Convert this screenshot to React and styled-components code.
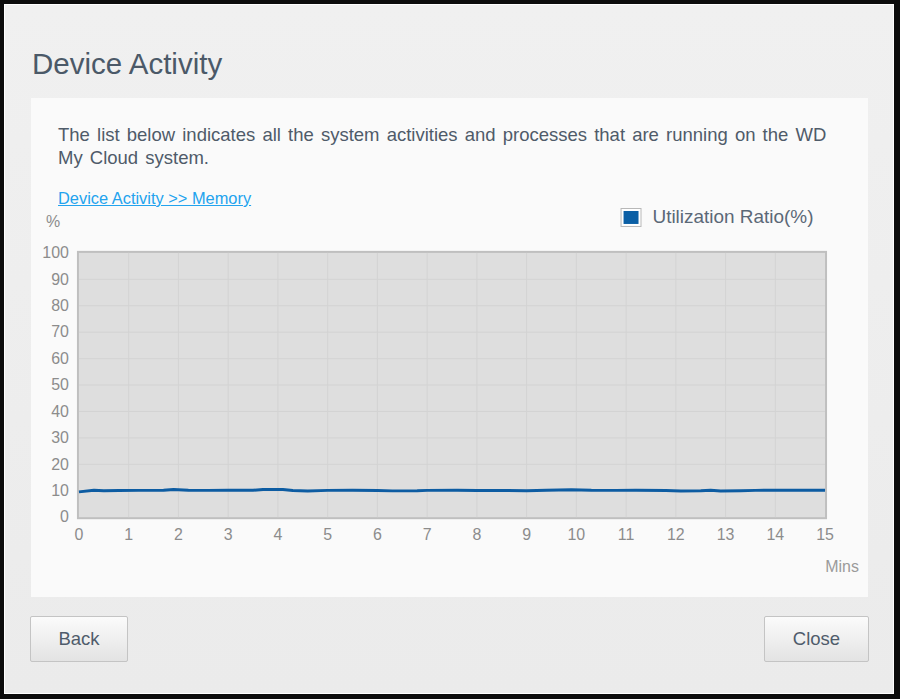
import React from 'react';
import styled, { createGlobalStyle } from 'styled-components';

const GlobalStyle = createGlobalStyle`
  html, body {
    margin: 0;
    padding: 0;
    background: #000;
  }
  body {
    font-family: "Liberation Sans", Arial, sans-serif;
  }
`;

// page coordinates of the chart
const X0 = 78;
const XSTEP = 49.87;
const Y0 = 516;
const YSTEP = 2.65;
const xOf = t => X0 + t * XSTEP;
const yOf = v => Y0 - v * YSTEP;

const samples = [
  [0, 9.6], [0.3, 10.2], [0.5, 10.0], [0.8, 10.1], [1.2, 10.15], [1.7, 10.2],
  [1.9, 10.5], [2.2, 10.2], [2.6, 10.15], [3.0, 10.2], [3.5, 10.2], [3.7, 10.5],
  [4.1, 10.45], [4.3, 10.1], [4.6, 9.9], [5.0, 10.15], [5.5, 10.2], [6.0, 10.1],
  [6.3, 9.95], [6.8, 10.0], [7.0, 10.15], [7.6, 10.2], [8.0, 10.1], [8.6, 10.15],
  [9.0, 10.0], [9.4, 10.2], [9.9, 10.4], [10.3, 10.2], [10.8, 10.15], [11.2, 10.2],
  [11.8, 10.1], [12.1, 9.9], [12.5, 10.0], [12.7, 10.2], [12.9, 9.9], [13.3, 10.0],
  [13.6, 10.15], [14.2, 10.2], [15, 10.2],
];

const yTicks = [0, 10, 20, 30, 40, 50, 60, 70, 80, 90, 100];
const xTicks = Array.from({ length: 16 }, (_, i) => i);

function UsageChart() {
  const points = samples.map(([t, v]) => `${xOf(t).toFixed(1)},${yOf(v).toFixed(1)}`).join(' ');
  return (
    <ChartSvg viewBox="31 205 837 391">
      <text x="45" y="225.5" fill="#8c8c8c" fontSize="16">%</text>

      <rect x="621.5" y="206.5" width="20" height="18" fill="#fff" stroke="#b8b8b8" />
      <rect x="624" y="209" width="15" height="13" fill="#0b5fa5" />
      <text x="653" y="221.5" fill="#5b6877" fontSize="19">Utilization Ratio(%)</text>

      <rect x="77" y="250" width="750" height="267" fill="#dedede" stroke="#bfbfbf" strokeWidth="2" />
      {xTicks.slice(1, 15).map(t => (
        <line key={`gx${t}`} x1={xOf(t)} x2={xOf(t)} y1="251" y2="516" stroke="#d3d3d3" strokeWidth="1" />
      ))}
      {yTicks.slice(1, 10).map(v => (
        <line key={`gy${v}`} x1="78" x2="826" y1={yOf(v)} y2={yOf(v)} stroke="#d3d3d3" strokeWidth="1" />
      ))}

      <polyline points={points} fill="none" stroke="#0d5ca2" strokeWidth="3" strokeLinejoin="round" />

      {yTicks.map(v => (
        <text key={`yl${v}`} x="68" y={yOf(v) + 5.3} textAnchor="end" fill="#8c8c8c" fontSize="16">{v}</text>
      ))}
      {xTicks.map(t => (
        <text key={`xl${t}`} x={xOf(t)} y="539.3" textAnchor="middle" fill="#8c8c8c" fontSize="16">{t}</text>
      ))}
      <text x="860" y="570.5" textAnchor="end" fill="#9a9a9a" fontSize="16">Mins</text>
    </ChartSvg>
  );
}

export default function App() {
  return (
    <>
      <GlobalStyle />
      <Frame>
        <Title>Device Activity</Title>
        <Panel>
          <Description>
            The list below indicates all the system activities and processes that are running on the WD My Cloud system.
          </Description>
          <Crumb href="#">Device Activity &gt;&gt; Memory</Crumb>
          <UsageChart />
        </Panel>
        <ButtonRow>
          <Button width="98px">Back</Button>
          <Button width="105px">Close</Button>
        </ButtonRow>
      </Frame>
    </>
  );
}

const Frame = styled.div`
  box-sizing: border-box;
  width: 900px;
  height: 699px;
  display: flex;
  flex-direction: column;
  border-style: solid;
  border-color: #0c0c0c;
  border-width: 4px 6px 5px 4px;
  padding: 0 26px 0 27px;
  background: linear-gradient(#f0f0f0, #ebebeb);
  box-shadow: inset 0 0 0 1px #ffffff;
`;

const Title = styled.h1`
  margin: 42px 0 0 1px;
  font-size: 29.5px;
  line-height: 35px;
  font-weight: normal;
  color: #4b5968;
`;

const Panel = styled.div`
  margin-top: 17px;
  height: 499px;
  box-sizing: border-box;
  padding-top: 25px;
  background: #fafafa;
  display: flex;
  flex-direction: column;
  align-items: flex-start;
`;

const Description = styled.p`
  margin: 0;
  padding: 0 27px;
  font-size: 18.5px;
  line-height: 23px;
  word-spacing: 2px;
  color: #4f5b69;
`;

const Crumb = styled.a`
  margin: 22px 0 0 27px;
  font-size: 16.4px;
  line-height: 14px;
  color: #22a3ee;
  text-decoration: underline;
`;

const ChartSvg = styled.svg`
  display: block;
  width: 837px;
  height: 391px;
  margin-top: 2px;
  font-family: "Liberation Sans", Arial, sans-serif;
`;

const ButtonRow = styled.div`
  display: flex;
  justify-content: space-between;
  margin: 19px -1px 0 -1px;
`;

const Button = styled.button`
  width: ${props => props.width};
  height: 46px;
  border: 1px solid #c4c4c4;
  border-radius: 2px;
  background: linear-gradient(#fbfbfb, #e3e3e3);
  font-family: "Liberation Sans", Arial, sans-serif;
  font-size: 18.5px;
  color: #4f5c6b;
  padding: 0;
`;
